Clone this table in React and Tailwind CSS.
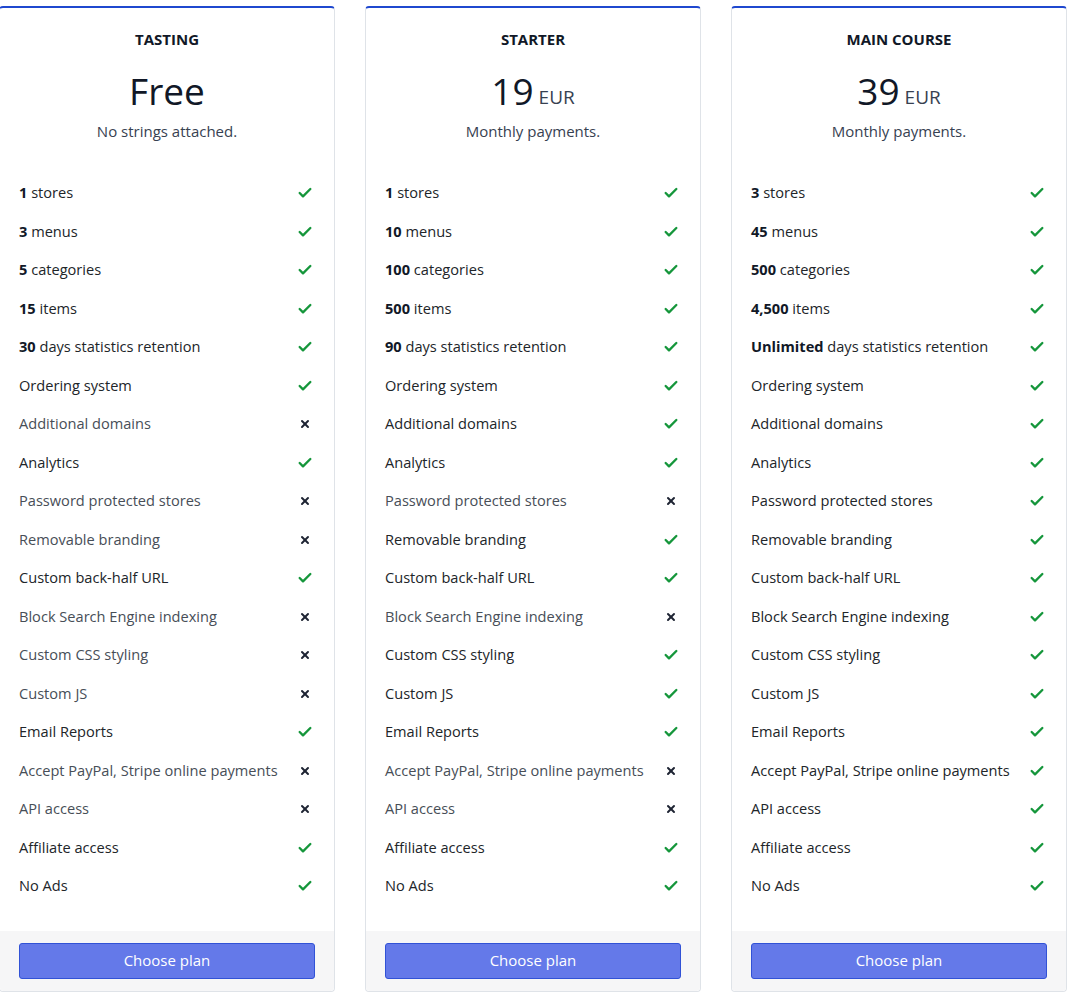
import { Check, X } from "lucide-react"

const features = [
  "stores",
  "menus",
  "categories",
  "items",
  "days statistics retention",
  "Ordering system",
  "Additional domains",
  "Analytics",
  "Password protected stores",
  "Removable branding",
  "Custom back-half URL",
  "Block Search Engine indexing",
  "Custom CSS styling",
  "Custom JS",
  "Email Reports",
  "Accept PayPal, Stripe online payments",
  "API access",
  "Affiliate access",
  "No Ads"
]

const plans = [
  {
    name: "TASTING",
    price: "Free",
    note: "No strings attached.",
    limits: ["1", "3", "5", "15", "30"],
    flags: [1, 0, 1, 0, 0, 1, 0, 0, 0, 1, 0, 0, 1, 1]
  },
  {
    name: "STARTER",
    price: "19",
    currency: "EUR",
    note: "Monthly payments.",
    limits: ["1", "10", "100", "500", "90"],
    flags: [1, 1, 1, 0, 1, 1, 0, 1, 1, 1, 0, 0, 1, 1]
  },
  {
    name: "MAIN COURSE",
    price: "39",
    currency: "EUR",
    note: "Monthly payments.",
    limits: ["3", "45", "500", "4,500", "Unlimited"],
    flags: [1, 1, 1, 1, 1, 1, 1, 1, 1, 1, 1, 1, 1, 1]
  }
]

function PlanCard({ plan }) {
  return (
    <div className="w-[336px] shrink-0 flex flex-col rounded-[4px] border border-[#dfe3e8] border-t-2 border-t-[#1f48cf] bg-white">
      <div className="pt-[21px] text-center">
        <h3 className="text-[15px] leading-5 font-bold text-[#111827]">{plan.name}</h3>
        <div className="mt-[20px] h-[44px] flex items-end justify-center text-[#111827]">
          <span className="text-[37px] leading-[44px]">{plan.price}</span>
          {plan.currency && (
            <span className="ml-[5px] mb-[3px] text-[19px] leading-[26px] text-[#374151]">{plan.currency}</span>
          )}
        </div>
        <p className="mt-[7px] text-[15px] leading-[22px] text-[#374151]">{plan.note}</p>
      </div>

      <ul className="mt-[32px] mb-[25px] px-[19px]">
        {features.map((f, i) => {
          const isLimit = i < 5
          const ok = isLimit ? true : plan.flags[i - 5] === 1
          return (
            <li key={f} className="h-[38.5px] flex items-center justify-between">
              <span className={ok ? "text-[14.6px] text-[#212529]" : "text-[14.6px] text-[#474e57]"}>
                {isLimit && <b className="font-bold text-[#111827]">{plan.limits[i]} </b>}
                {f}
              </span>
              {ok ? (
                <Check className="w-[16px] h-[16px] mr-[2px] text-[#15963b]" strokeWidth={3.5} />
              ) : (
                <X className="w-[12px] h-[12px] mr-[4px] text-[#1e2433]" strokeWidth={4} />
              )}
            </li>
          )
        })}
      </ul>

      <div className="mt-auto bg-[#f6f6f7] px-[19px] pt-[12px] pb-[12px] rounded-b-[4px]">
        <button className="w-full h-[36px] rounded-[3px] border border-[#3152d6] bg-[#6479e9] text-white text-[15px]">
          Choose plan
        </button>
      </div>
    </div>
  )
}

export default function App() {
  return (
    <div
      className="w-[1070px] h-[998px] bg-white overflow-hidden"
      style={{ fontFamily: '"Open Sans", "Noto Sans", sans-serif' }}
    >
      <div className="flex gap-[30px] ml-[-1px] pt-[6px]">
        {plans.map((p) => (
          <PlanCard key={p.name} plan={p} />
        ))}
      </div>
    </div>
  )
}
